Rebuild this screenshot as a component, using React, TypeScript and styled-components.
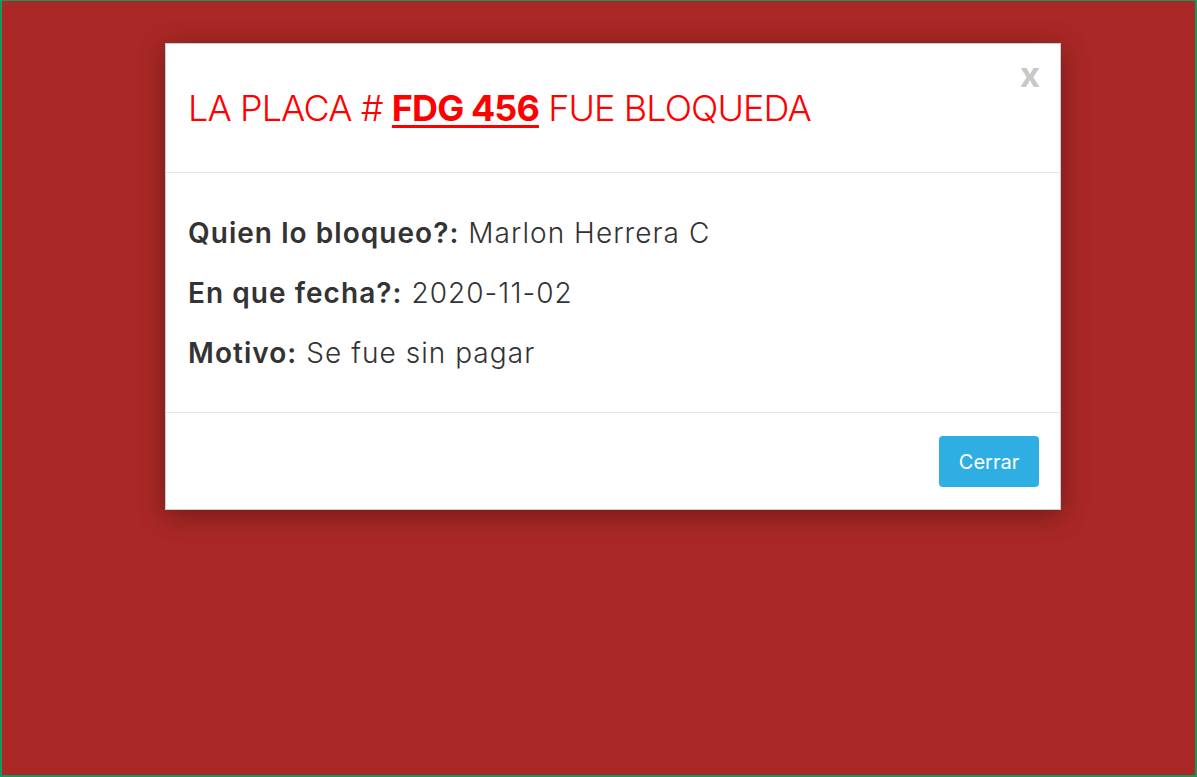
import React from "react";
import styled, { createGlobalStyle } from "styled-components";

const GlobalStyle = createGlobalStyle`
  html, body {
    margin: 0;
    padding: 0;
  }
  body {
    font-family: Inter, "Noto Sans", "Liberation Sans", sans-serif;
  }
  * { box-sizing: border-box; }
`;

const Backdrop = styled.div`
  width: 1197px;
  height: 777px;
  background: #aa2825;
  border: 2px solid #17985a;
  border-top-width: 1px;
  padding: 42px 134px 0 163px;
`;

const Dialog = styled.div`
  width: 896px;
  background: #fff;
  border: 1px solid rgba(0, 0, 0, 0.2);
  box-shadow: 0 5px 25px rgba(0, 0, 0, 0.35);
  display: flex;
  flex-direction: column;
`;

const Header = styled.div`
  position: relative;
  height: 129px;
  border-bottom: 1px solid #e5e5e5;
  display: flex;
  align-items: center;
  padding: 0 22px;
`;

const Title = styled.h2`
  margin: 0 0 0;
  font-size: 36px;
  font-weight: 300;
  color: #ff0000;
  letter-spacing: -0.9px;
`;

const Plate = styled.a`
  font-weight: 700;
  color: #ff0000;
  text-decoration: underline;
  text-decoration-thickness: 3px;
  text-underline-offset: 4px;
`;

const Close = styled.button`
  position: absolute;
  top: 13px;
  right: 20px;
  border: none;
  background: transparent;
  padding: 0;
  font-family: Inter, "Liberation Sans", sans-serif;
  font-size: 35px;
  font-weight: 700;
  color: #c8c8c8;
  line-height: 1;
  cursor: pointer;
`;

const Body = styled.div`
  height: 240px;
  border-bottom: 1px solid #e5e5e5;
  padding: 43px 22px 0;
  display: flex;
  flex-direction: column;
  gap: 26px;
`;

const Line = styled.p`
  margin: 0;
  font-size: 28px;
  line-height: 34px;
  font-weight: 300;
  letter-spacing: 1.05px;
  color: #333;
`;

const Label = styled.strong`
  font-weight: 600;
`;

const Footer = styled.div`
  height: 96px;
  display: flex;
  justify-content: flex-end;
  align-items: flex-start;
  padding: 23px 21px 0;
`;

const Button = styled.button`
  width: 100px;
  height: 51px;
  border: none;
  border-radius: 4px;
  background: #2eaee3;
  color: #fff;
  font-family: Inter, "Liberation Sans", sans-serif;
  font-size: 20px;
  font-weight: 400;
  cursor: pointer;
`;

export default function App() {
  return (
    <>
      <GlobalStyle />
      <Backdrop>
        <Dialog>
          <Header>
            <Title>
              LA PLACA # <Plate>FDG 456</Plate> FUE BLOQUEDA
            </Title>
            <Close>x</Close>
          </Header>
          <Body>
            <Line>
              <Label>Quien lo bloqueo?:</Label> Marlon Herrera C
            </Line>
            <Line>
              <Label>En que fecha?:</Label> 2020-11-02
            </Line>
            <Line>
              <Label>Motivo:</Label> Se fue sin pagar
            </Line>
          </Body>
          <Footer>
            <Button>Cerrar</Button>
          </Footer>
        </Dialog>
      </Backdrop>
    </>
  );
}
